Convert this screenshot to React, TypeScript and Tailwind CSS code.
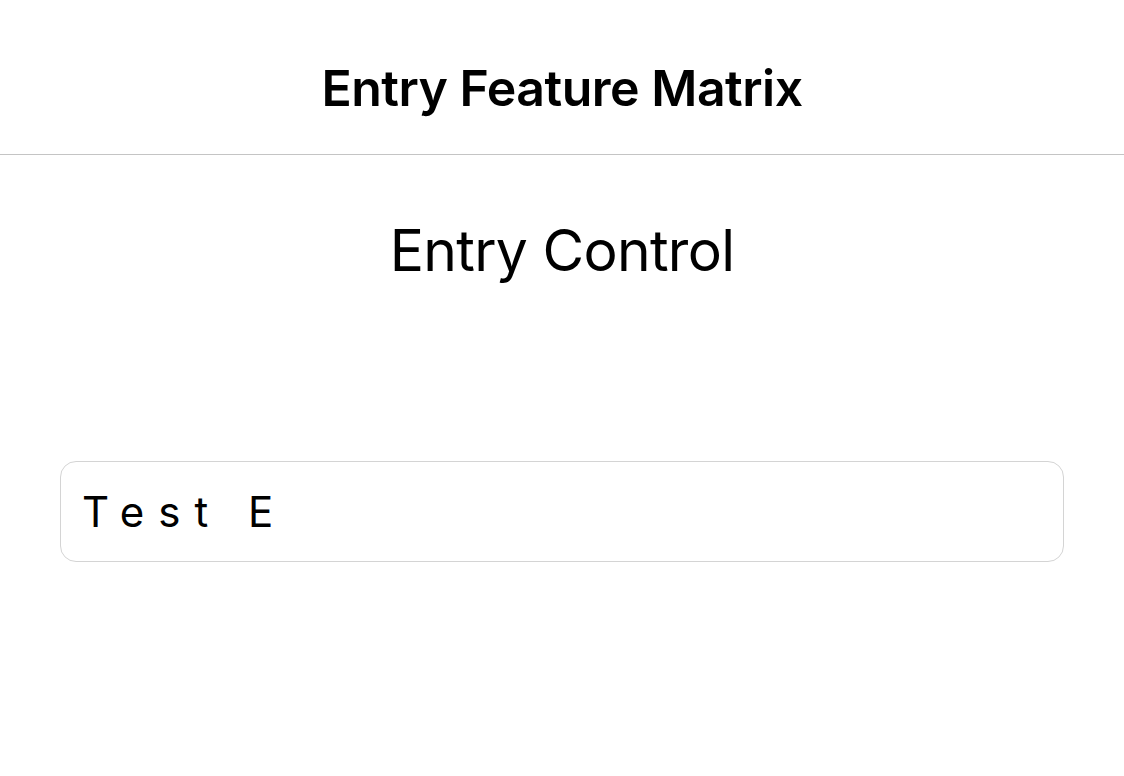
export default function App() {
  return (
    <div className="w-[1124px] h-[776px] bg-white text-black" style={{ fontFamily: "Inter, 'Noto Sans', sans-serif" }}>
      <header className="h-[155px] border-b border-[#c4c4c4] flex items-center justify-center pt-[22px]">
        <h1 className="text-[50px] font-semibold tracking-[-0.5px] leading-none">Entry Feature Matrix</h1>
      </header>
      <div className="flex flex-col items-center">
        <h2 className="mt-[67px] text-[57px] font-normal leading-none tracking-[-0.7px]">Entry Control</h2>
      </div>
      <div className="px-[60px] mt-[182px]">
        <div className="h-[101px] border border-[#d4d4d4] rounded-[16px] flex items-center px-[21px]">
          <span className="text-[42px] leading-none tracking-[14px]">Test E</span>
        </div>
      </div>
    </div>
  );
}
